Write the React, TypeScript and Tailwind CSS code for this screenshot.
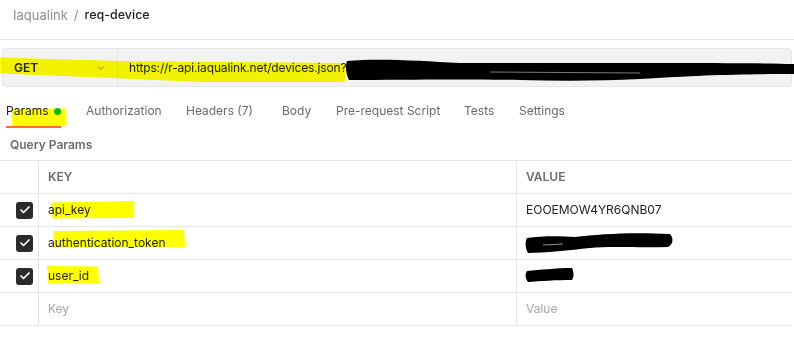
import { ChevronDown, Check } from "lucide-react"

const tabs = [
  { label: "Authorization", w: "w-[100px]" },
  { label: "Headers (7)", w: "w-[96px]" },
  { label: "Body", w: "w-[54px]" },
  { label: "Pre-request Script", w: "w-[128px]" },
  { label: "Tests", w: "w-[55px]" },
  { label: "Settings", w: "" },
]

const params = [
  { key: "api_key", value: "EOOEMOW4YR6QNB07" },
  { key: "authentication_token", value: "" },
  { key: "user_id", value: "" },
]

function Checkbox() {
  return (
    <span className="flex h-[17px] w-[17px] items-center justify-center rounded-[3px] bg-[#2b2b2b]">
      <Check className="h-[12px] w-[12px] text-white" strokeWidth={3.5} />
    </span>
  )
}

// marker strokes and redactions drawn over the screenshot
function Markup() {
  return (
    <>
      <svg className="pointer-events-none absolute left-0 top-0 mix-blend-multiply" width="794" height="346">
        <g fill="#ffff00">
          <path d="M0,57.5 L120,61 L345,63 L345,82 L200,82 L100,77.5 L0,73.5 Z" />
          <path d="M11,109 L66,108.5 L66.5,126 L12,126.5 Z" />
          <path d="M51,202.5 L133,201 L134,218 L52,218.5 Z" />
          <path d="M53,231 L184,230 L185,247 L54,247.5 Z" />
          <path d="M47,266 L98,266.5 L99,283 L48,283.5 Z" />
        </g>
      </svg>
      <svg className="pointer-events-none absolute left-0 top-0" width="794" height="346">
        <path
          d="M347,61 C 380,58 420,61 460,63 L 600,63 C 700,63 760,63 794,64 L 794,74 C 740,74 700,75 640,79 C 600,81 560,81 520,80 C 450,79 400,80 349,80 C 346,74 345,66 347,61 Z"
          fill="#000"
        />
        <path d="M490,72 L640,73" stroke="#fff" strokeWidth="0.8" opacity="0.6" />
        <path
          d="M527,238 C 540,236 560,236 575,237 C 600,234 630,232 670,234 C 674,238 673,245 668,247 C 640,248 610,246 590,248 C 570,250 545,253 528,253 C 525,248 525,242 527,238 Z"
          fill="#000"
        />
        <path d="M543,245 L563,244" stroke="#fff" strokeWidth="0.8" opacity="0.7" />
        <path
          d="M527,271 C 540,270 555,268 572,268 C 574,272 574,277 572,280 C 556,280 540,281 528,282 C 525,278 525,274 527,271 Z"
          fill="#000"
        />
      </svg>
    </>
  )
}

export default function App() {
  return (
    <div className="relative h-[346px] w-[794px] overflow-hidden bg-white font-['Inter',sans-serif] text-[#212121]">
      <div className="flex h-[40px] items-start gap-[6px] border-b border-[#e6e6e6] pl-[13px] pt-[6px] text-[13px] leading-[18px]">
        <span className="text-[#8f8f8f]">Iaqualink</span>
        <span className="text-[#8f8f8f]">/</span>
        <span className="text-[12.5px] font-medium">req-device</span>
      </div>

      <div className="ml-[2px] mr-[2px] mt-[8px] flex h-[39px] rounded-[4px] border border-[#e6e6e6] bg-[#f2f2f2]">
        <div className="flex w-[115px] items-center justify-between border-r border-[#e6e6e6] pl-[11px] pr-[10px]">
          <span className="text-[12px] font-semibold">GET</span>
          <ChevronDown className="h-[12px] w-[12px] text-[#6b6b6b]" strokeWidth={1.5} />
        </div>
        <div className="flex items-center pl-[11px] text-[12px] tracking-[-0.15px]">
          https://r-api.iaqualink.net/devices.json?
        </div>
      </div>

      <div className="ml-[6px] flex pt-[15px] text-[12px] leading-[18px] text-[#6b6b6b]">
        <div className="w-[80px]">
          <div className="flex w-[55px] flex-col">
            <div className="flex items-center gap-[5px] text-[#212121]">
              Params
              <span className="h-[7px] w-[7px] rounded-full bg-[#0cbb52]" />
            </div>
            <div className="mt-[6px] h-[2px] bg-[#ff6c37]" />
          </div>
        </div>
        {tabs.map((t) => (
          <div key={t.label} className={t.w}>
            {t.label}
          </div>
        ))}
      </div>

      <div className="mt-[8px] pl-[10px] text-[12px] font-semibold leading-[18px] text-[#6b6b6b]">Query Params</div>

      <div className="mt-[6px] w-[792px] border-t border-[#e6e6e6] text-[12px]">
        <div className="flex h-[33px] border-b border-[#e6e6e6] font-semibold text-[#6b6b6b]">
          <div className="w-[39px] border-r border-[#e6e6e6]" />
          <div className="flex w-[478px] items-center border-r border-[#e6e6e6] pl-[9px]">KEY</div>
          <div className="flex flex-1 items-center pl-[9px]">VALUE</div>
        </div>
        {params.map((p) => (
          <div key={p.key} className="flex h-[33px] border-b border-[#e6e6e6]">
            <div className="flex w-[39px] items-center border-r border-[#e6e6e6] pl-[16px]">
              <Checkbox />
            </div>
            <div className="flex w-[478px] items-center border-r border-[#e6e6e6] pl-[9px]">{p.key}</div>
            <div className="flex flex-1 items-center pl-[9px]">{p.value}</div>
          </div>
        ))}
        <div className="flex h-[33px] border-b border-[#e6e6e6] text-[#a6a6a6]">
          <div className="w-[39px] border-r border-[#e6e6e6]" />
          <div className="flex w-[478px] items-center border-r border-[#e6e6e6] pl-[9px]">Key</div>
          <div className="flex flex-1 items-center pl-[9px]">Value</div>
        </div>
      </div>

      <Markup />
    </div>
  )
}
